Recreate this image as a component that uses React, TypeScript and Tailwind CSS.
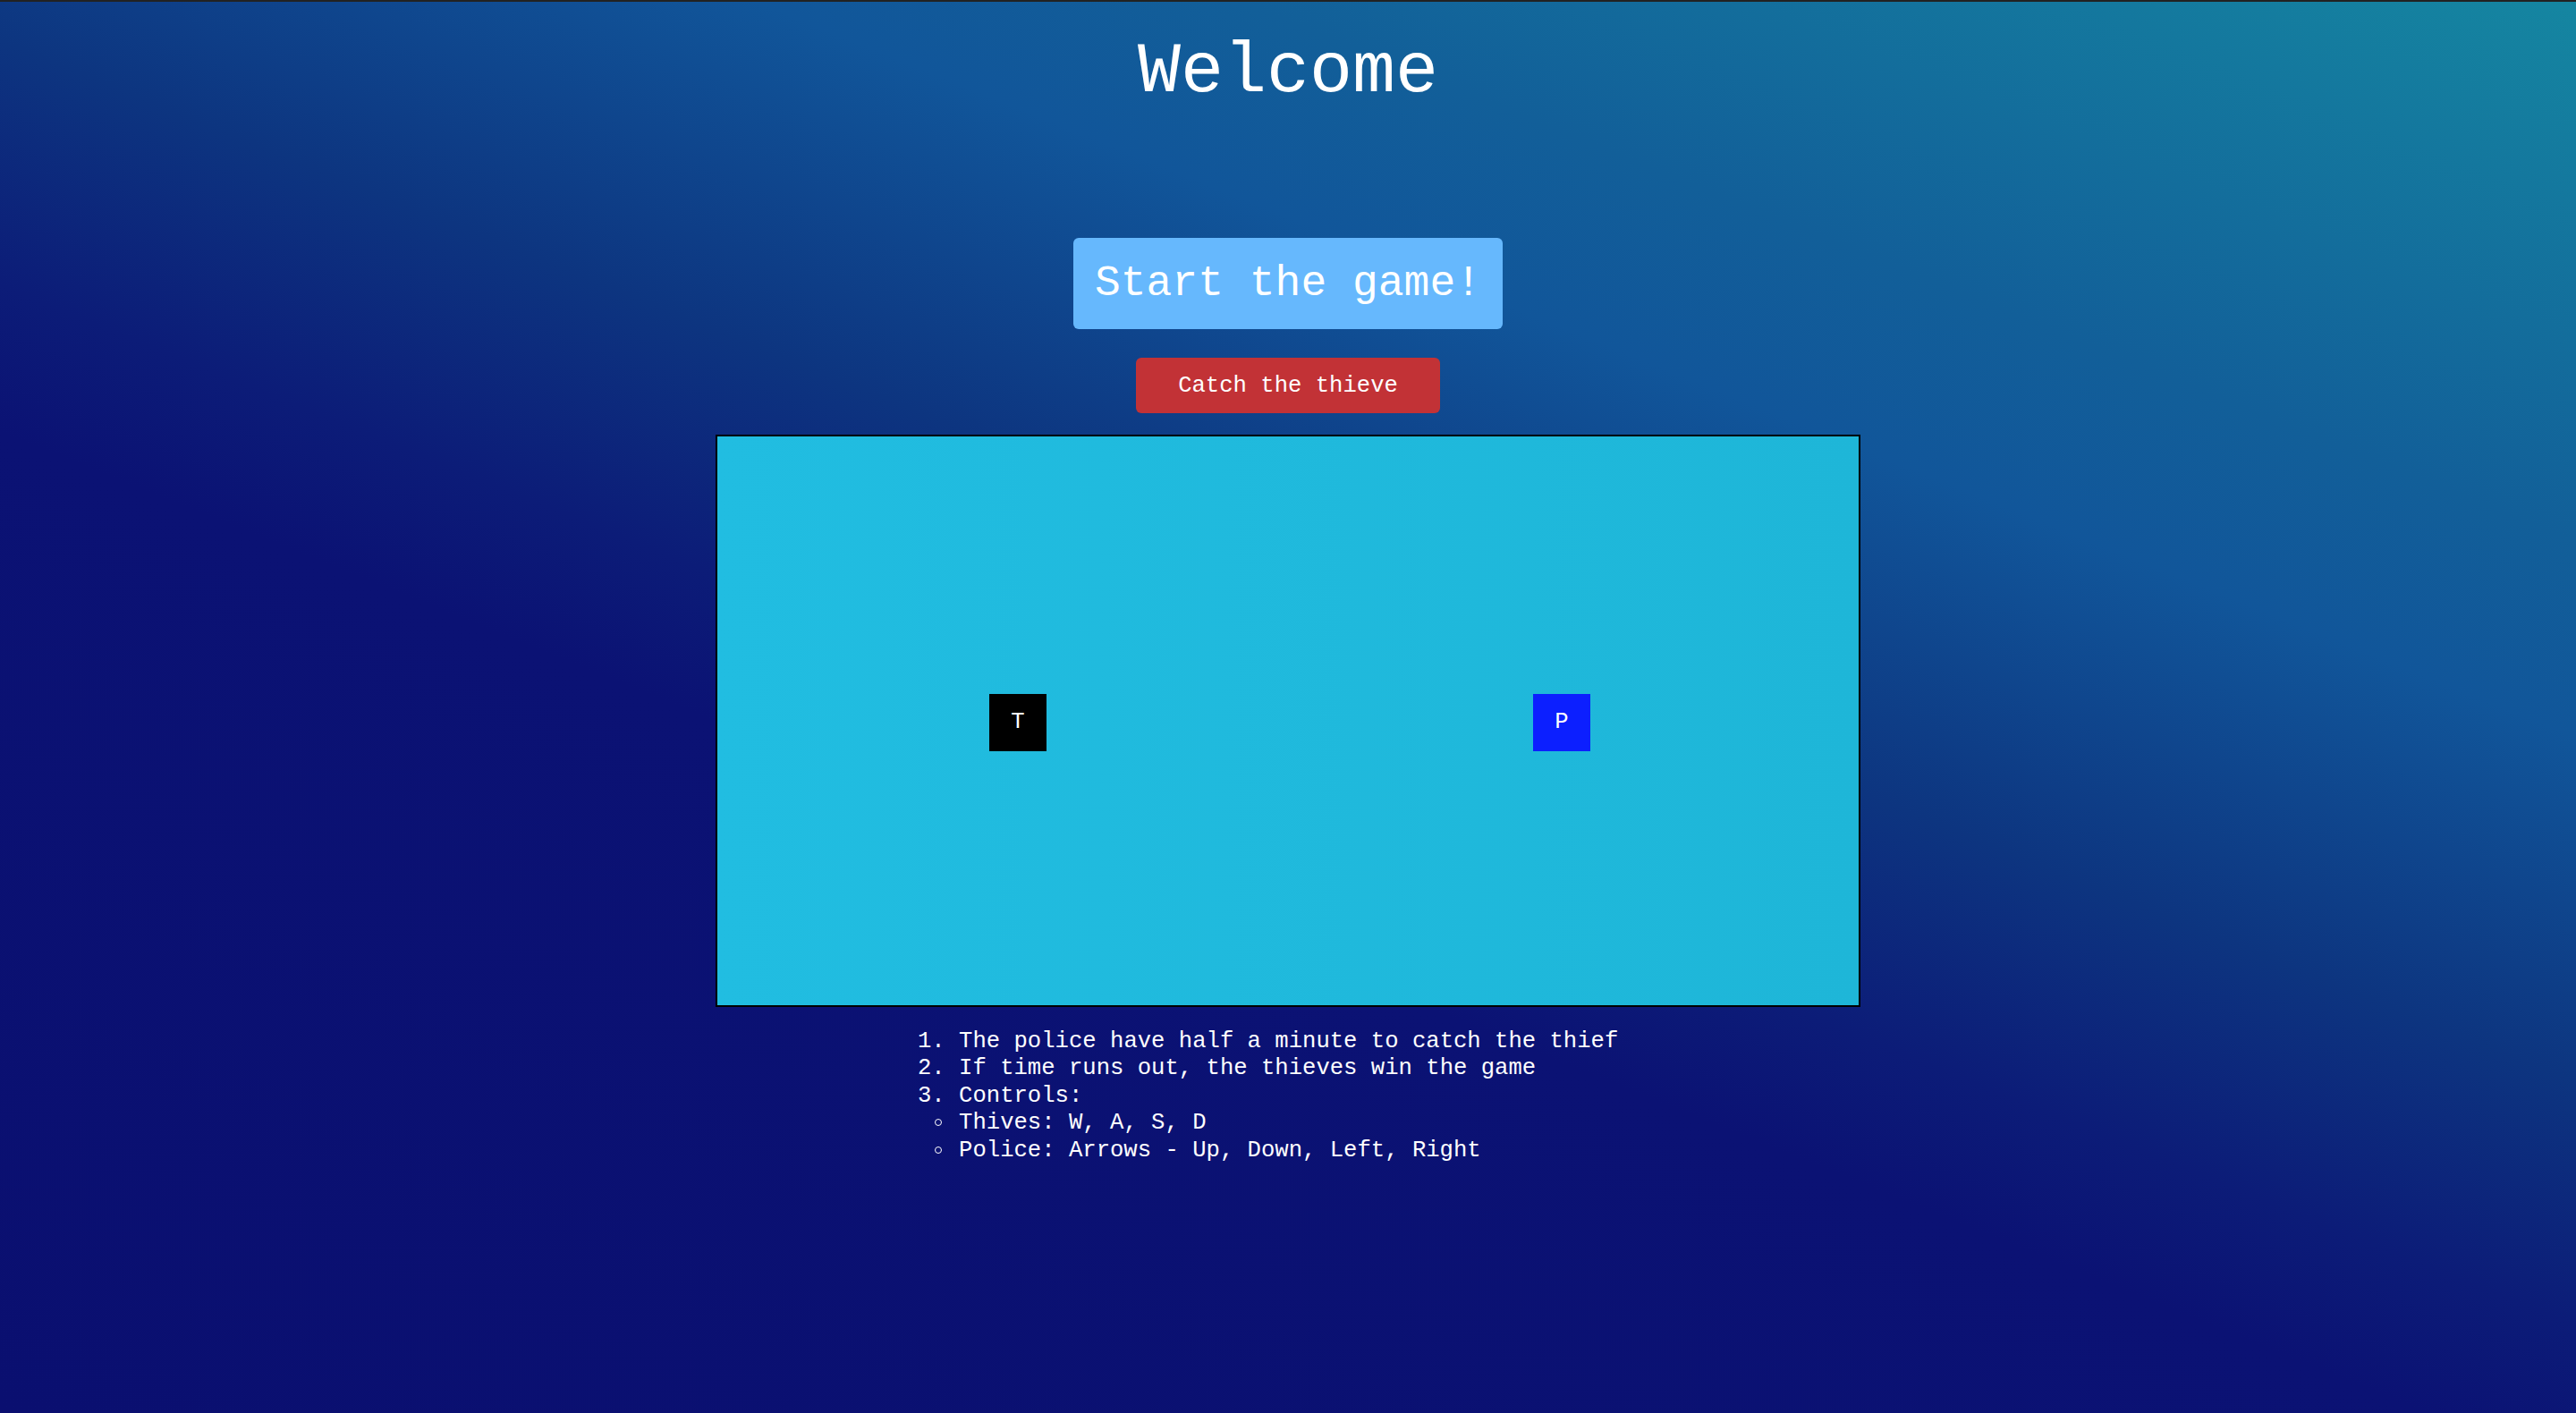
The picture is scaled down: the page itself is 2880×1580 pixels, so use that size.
const mono = "font-['Liberation_Mono','Courier_New',monospace]"

function Piece({ label, className }: { label: string; className: string }) {
  return (
    <div className={`absolute top-[288px] w-16 h-16 flex items-center justify-center text-white text-[25.6px] ${className}`}>
      {label}
    </div>
  )
}

function Bullet() {
  return (
    <span className="inline-block w-[1ch] text-center">
      <span className="inline-block w-[8px] h-[8px] rounded-full border-[1.5px] border-white align-middle" />
    </span>
  )
}

export default function App() {
  const rules = [
    '1. The police have half a minute to catch the thief',
    '2. If time runs out, the thieves win the game',
    '3. Controls:',
  ]

  const controls = ['Thives: W, A, S, D', 'Police: Arrows - Up, Down, Left, Right']

  return (
    <div
      className={`min-h-screen border-t-2 border-[#222222] text-white ${mono} bg-[linear-gradient(22deg,#0a0f70_0%,#0b1274_40%,#0c1c78_46%,#0d3580_56%,#11569a_70%,#125f99_78%,#1586a1_100%)]`}
    >
      <div className="flex flex-col items-center">
        {/* Title */}
        <h1 className="mt-[34px] text-[80px] leading-[90px] font-normal">Welcome</h1>

        {/* Buttons */}
        <button className="mt-[140px] px-6 py-6 text-[48px] leading-[54px] bg-[#66b8fd] rounded-[6px] text-white">
          Start the game!
        </button>
        <button className="mt-[32px] px-[47px] py-[16.5px] text-[25.6px] leading-[29px] bg-[#c23236] rounded-[6px] text-white">
          Catch the thieve
        </button>

        {/* Game board */}
        <div className="relative mt-[24px] w-[1280px] h-[640px] border-2 border-black bg-[linear-gradient(to_right,#21bde1,#1eb6d8)]">
          <Piece label="T" className="left-[304px] bg-black" />
          <Piece label="P" className="left-[912px] bg-[#0c1fff]" />
        </div>

        {/* Rules */}
        <div className="w-[1280px] mt-[24px] pl-[226px] text-[25.6px] leading-[30.4px] whitespace-pre">
          {rules.map((rule) => (
            <div key={rule}>{rule}</div>
          ))}
          {controls.map((control) => (
            <div key={control}>
              {' '}
              <Bullet />
              {' ' + control}
            </div>
          ))}
        </div>
      </div>
    </div>
  )
}
